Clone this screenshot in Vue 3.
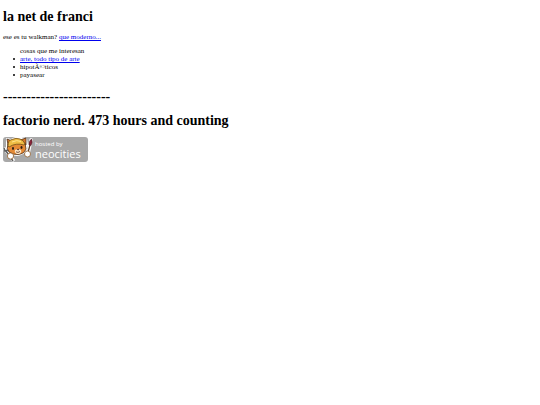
<template>
  <main class="page">
    <h1>la net de franci</h1>
    <p>ese es tu walkman? <a href="#moderno">que moderno...</a></p>

    <section class="interests">
      <p id="interests-title">cosas que me interesan</p>
      <ul aria-labelledby="interests-title">
        <li v-for="item in interests" :key="item.text">
          <a v-if="item.href" :href="item.href">{{ item.text }}</a>
          <template v-else>{{ item.text }}</template>
        </li>
      </ul>
    </section>

    <h1>-----------------------</h1>
    <h1>factorio nerd. 473 hours and counting</h1>

    <!-- Neocities badge -->
    <a class="badge" href="#neocities" aria-label="hosted by neocities">
      <svg class="cat" viewBox="0 0 30 25" aria-hidden="true">
        <!-- white outline -->
        <g fill="#fff" stroke="#fff" stroke-width="2" stroke-linejoin="round" stroke-linecap="round">
          <path d="M4 2 L8 3 Q13 0 18 1 L23 2 L24 8 L23 13 Q19 18 14 18 L8 17 L4 12 Z" />
          <path d="M2 12 L10 23 M28 3 L25 17" stroke-width="3.4" />
        </g>
        <!-- ears and head -->
        <path d="M5 8 L4 2 L9 4 Z M17 3 L23 1 L23 8 Z" fill="#d9772a" stroke="#4a2d17" stroke-width=".8" />
        <path d="M5 7 Q3 12 6 15 Q10 18 15 17.5 Q21 17 23 12 L22 6 Z" fill="#e58a35" stroke="#4a2d17" stroke-width=".8" />
        <path d="M12 13 Q15 11 18 13 Q19 15 17 16.5 Q15 17.5 13 16.5 Q11 15 12 13 Z" fill="#fbe6c4" />
        <!-- helmet -->
        <path d="M5 9 Q5 3 9 2.5 Q13 .5 17 2 Q21 3.5 22 7 L21 8 Q13 5.5 6 10 Z" fill="#efbd45" stroke="#765018" stroke-width=".8" />
        <path d="M9 5 Q14 2.5 18 4.5" fill="none" stroke="#ffe48b" stroke-width="1" />
        <ellipse cx="10" cy="11.5" rx="1" ry="1.4" fill="#2b1d16" />
        <ellipse cx="18.5" cy="10.5" rx="1" ry="1.4" fill="#2b1d16" />
        <path d="M13.5 12 L16.5 11.8 L15.2 13.5 Z" fill="#5a2b20" />
        <path d="M13 14.8 Q15 16.2 17 14.5" fill="none" stroke="#5a2b20" stroke-width=".8" />
        <!-- wrench -->
        <path d="M1 11 L2 14 L5 13 M3 14 L10 24" fill="none" stroke="#5d5d5d" stroke-width="1.5" />
        <!-- brush -->
        <path d="M27 8 L24 19" stroke="#5f4028" stroke-width="1.3" />
        <path d="M26 8 Q25.5 4 28.5 2 Q30 5 28 8.5 Z" fill="#8b2439" stroke="#3b2025" stroke-width=".5" />
        <!-- paws -->
        <circle cx="7.5" cy="19" r="3.1" fill="#fff" stroke="#94612f" stroke-width=".8" />
        <circle cx="24.5" cy="17" r="3" fill="#fff" stroke="#94612f" stroke-width=".8" />
      </svg>
      <span class="label">
        <small>hosted by</small>
        <span>neocities</span>
      </span>
    </a>
  </main>
</template>

<script setup>
const interests = [
  { text: 'arte, todo tipo de arte', href: '#arte' },
  { text: 'hipotÃ©ticos' },
  { text: 'payasear' },
];
</script>

<style>
body {
  margin: 0;
  background: #fff;
}
</style>

<style scoped>
.page {
  padding: 9px 3px;
  color: #000;
  font-family: "Liberation Serif", "Times New Roman", serif;
  font-size: 7px;
  line-height: 8px;
}

h1 {
  margin: 0 0 8px;
  font-size: 14px;
  line-height: 16px;
}

p {
  margin: 0;
}

a {
  color: #0000ee;
}

.interests {
  margin: 6px 0 10px;
  padding-left: 17px;
}

ul {
  margin: 0;
  padding: 0;
  list-style: none;
}

li {
  display: flex;
  align-items: center;
}

li::before {
  content: "";
  width: 2px;
  height: 2px;
  margin-left: -7px;
  margin-right: 5px;
  border-radius: 50%;
  background: #000;
}

.badge {
  display: flex;
  width: 85px;
  height: 25px;
  border-radius: 3px;
  background: #a8a8a8;
  color: #fff;
  font-family: "Open Sans", sans-serif;
  text-decoration: none;
}

.cat {
  flex: none;
  width: 30px;
  height: 25px;
}

.label {
  display: flex;
  flex-direction: column;
  padding: 3px 0 0 2px;
}

.label small {
  font-size: 6px;
  line-height: 8px;
}

.label span {
  font-size: 11px;
  line-height: 11px;
}
</style>
